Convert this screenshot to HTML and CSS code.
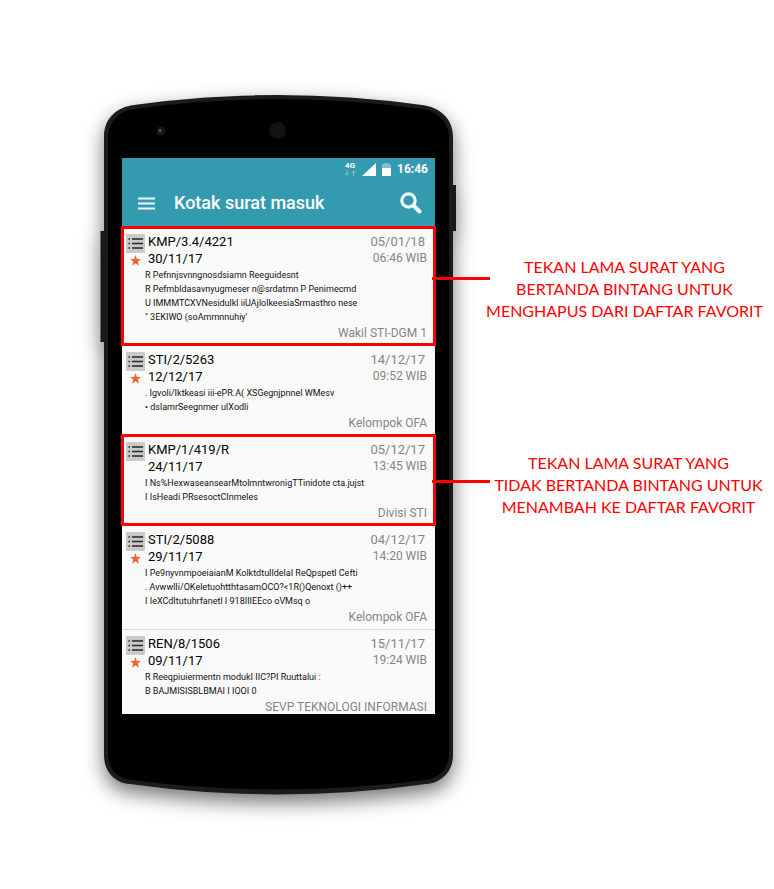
FILE: index.html
```html
<!DOCTYPE html>
<html lang="id">
<head>
<meta charset="utf-8">
<meta name="viewport" content="width=device-width, initial-scale=1">
<title>Kotak surat masuk</title>
<link rel="stylesheet" href="styles.css">
</head>
<body>
<svg class="defs" aria-hidden="true">
  <symbol id="list" viewBox="0 0 19 19"><rect width="19" height="19" rx="1" fill="#c9cbca"/><path d="M6 5h11M6 9.500h11M6 14h11" stroke="#2b2523" stroke-width="1.500"/><path d="M2.500 5H4M2.500 9.500H4M2.500 14H4" stroke="#2b2523" stroke-width="1.500"/></symbol>
  <symbol id="star" viewBox="0 0 24 24"><path fill="#f4622d" d="M12 0l3.100 8.500 8.900.300-7 5.600 2.400 8.800L12 18.100l-7.400 5.100L7 14.400 0 8.800l8.900-.300z"/></symbol>
</svg>
<main class="guide">
  <section class="phone">
    <svg class="phone-body" viewBox="0 0 350 700" preserveAspectRatio="none" aria-hidden="true">
      <path class="key" d="M1 136h-3.500v111H1zM349 90h4v46h-4z"/>
      <path class="rim" d="M1 42C1 23 14 12 31 10Q175 -10 319 10C336 12 350 23 350 42V660C350 677 338 688 323 689Q175 710 27 689C12 688 1 677 1 660z"/>
      <path class="face" d="M5 43C5 27 16 16 31 14Q175 -6 319 14C334 16 346 27 346 43V659C346 673 337 683 322 685Q175 704 28 685C13 683 5 673 5 659z"/>
      <circle cx="58" cy="36" r="4.500" fill="#171719"/><circle cx="57.500" cy="36" r="2" fill="#23234d"/><circle cx="57" cy="35.500" r="1" fill="#7a7aa8"/>
      <circle cx="174.500" cy="35.500" r="8.500" fill="#121212"/>
    </svg>
    <div class="screen">
      <header class="header">
        <div class="status">
          <span class="network">4G
            <svg width="12" height="6" viewBox="0 0 12 6" aria-hidden="true"><path d="M3 0v5M1 3l2 2 2-2M9.500 6V1M7.500 3l2-2 2 2" fill="none" stroke="#82c1cc"/></svg>
          </span>
          <svg width="14" height="13" viewBox="0 0 14 13" aria-hidden="true"><path d="M14 0v13H0z" fill="#fff"/></svg>
          <svg width="9" height="13" viewBox="0 0 9 13" aria-hidden="true"><path d="M2.500 0h4v1H9v4H0V1h2.500z" fill="#82c1cc"/><path d="M0 5h9v8H0z" fill="#fff"/></svg>
          <time class="clock">16:46</time>
        </div>
        <div class="toolbar">
          <button class="icon-button" type="button" aria-label="Menu"><svg width="17" height="13" viewBox="0 0 17 13"><path d="M0 1.500h17M0 6.500h17M0 11.500h17" stroke="#eff8f9" stroke-width="2"/></svg></button>
          <h1 class="title">Kotak surat masuk</h1>
          <button class="icon-button" type="button" aria-label="Cari"><svg width="22" height="22" viewBox="0 0 22 22"><circle cx="8.500" cy="8.500" r="6.700" fill="none" stroke="#eff8f9" stroke-width="3.200"/><path d="M13.500 13.500l6 6" stroke="#eff8f9" stroke-width="4" stroke-linecap="round"/></svg></button>
        </div>
      </header>
      <ul class="letters">
        <li class="letter letter--marked">
          <div class="marks"><svg class="list-icon"><use href="#list"/></svg><svg class="star-icon"><use href="#star"/></svg></div>
          <div class="meta"><h2 class="number">KMP/3.4/4221</h2><time class="sent">05/01/18</time><time class="number">30/11/17</time><time class="hour">06:46 WIB</time></div>
          <p class="excerpt">R Pefnnjsvnngnosdsiamn Reeguidesnt<br>R Pefmbldasavnyugmeser n@srdatmn P Penimecmd<br>U IMMMTCXVNesidulkl iiUAjlolkeesiaSrmasthro nese<br>" 3EKIWO (soAmmnnuhiy'</p>
          <p class="sender">Wakil STI-DGM 1</p>
        </li>
        <li class="letter">
          <div class="marks"><svg class="list-icon"><use href="#list"/></svg><svg class="star-icon"><use href="#star"/></svg></div>
          <div class="meta"><h2 class="number">STI/2/5263</h2><time class="sent">14/12/17</time><time class="number">12/12/17</time><time class="hour">09:52 WIB</time></div>
          <p class="excerpt">. Igvoli/Iktkeasi iii-ePR.A( XSGegnjpnnel WMesv<br>• dslamrSeegnmer uIXodli</p>
          <p class="sender">Kelompok OFA</p>
        </li>
        <li class="letter letter--marked letter--short">
          <div class="marks"><svg class="list-icon"><use href="#list"/></svg></div>
          <div class="meta"><h2 class="number">KMP/1/419/R</h2><time class="sent">05/12/17</time><time class="number">24/11/17</time><time class="hour">13:45 WIB</time></div>
          <p class="excerpt">I Ns%HexwaseansearMtolmntwronigTTinidote cta.jujst<br>I IsHeadi PRsesoctCInmeles</p>
          <p class="sender">Divisi STI</p>
        </li>
        <li class="letter">
          <div class="marks"><svg class="list-icon"><use href="#list"/></svg><svg class="star-icon"><use href="#star"/></svg></div>
          <div class="meta"><h2 class="number">STI/2/5088</h2><time class="sent">04/12/17</time><time class="number">29/11/17</time><time class="hour">14:20 WIB</time></div>
          <p class="excerpt">I Pe9nyvnmpoeiaianM KolktdtuIldelaI ReQpspetl Cefti<br>. AvwwlIi/OKeletuohtthtasamOCO?&lt;1R()Qenoxt ()++<br>I IeXCdItutuhrfanetl I 918IIIEEco oVMsq o</p>
          <p class="sender">Kelompok OFA</p>
        </li>
        <li class="letter letter--ruled">
          <div class="marks"><svg class="list-icon"><use href="#list"/></svg><svg class="star-icon"><use href="#star"/></svg></div>
          <div class="meta"><h2 class="number">REN/8/1506</h2><time class="sent">15/11/17</time><time class="number">09/11/17</time><time class="hour">19:24 WIB</time></div>
          <p class="excerpt">R Reeqpiuiermentn modukI IIC?PI Ruuttalui :<br>B BAJMISISBLBMAI I IOOI 0</p>
          <p class="sender">SEVP TEKNOLOGI INFORMASI</p>
        </li>
      </ul>
    </div>
  </section>
  <aside class="callouts">
    <p class="callout">TEKAN LAMA SURAT YANG<br>BERTANDA BINTANG UNTUK<br>MENGHAPUS DARI DAFTAR FAVORIT</p>
    <p class="callout callout--add">TEKAN LAMA SURAT YANG<br>TIDAK BERTANDA BINTANG UNTUK<br>MENAMBAH KE DAFTAR FAVORIT</p>
  </aside>
</main>
</body>
</html>
```
FILE: styles.css
```css
* { box-sizing: border-box; margin: 0; padding: 0; }
body { background: #fff; font-family: Roboto, "Liberation Sans", sans-serif; }
.defs { display: none; }

.guide { display: flex; padding: 95px 8px 94px 103px; }
.phone { position: relative; flex: 0 1 350px; padding: 63px 18px 81px 19px; }
.phone-body { position: absolute; inset: 0; width: 100%; height: 100%; overflow: visible; filter: drop-shadow(0 8px 10px rgba(0, 0, 0, .55)); }
.key { fill: #191919; }
.rim { fill: #1b1b1b; }
.face { fill: #000; }
.screen { position: relative; background: #fafafa; }

.header { height: 69px; background: #339ab0; color: #fff; }
.status { display: flex; justify-content: flex-end; align-items: center; gap: 6px; height: 22px; padding-right: 7px; }
.network { display: flex; flex-direction: column; align-items: center; font-size: 8px; font-weight: 700; line-height: 8px; }
.clock { font-size: 12px; font-weight: 700; line-height: 16px; }
.toolbar { display: flex; align-items: center; height: 46px; padding: 0 13px 0 16px; }
.icon-button { display: flex; border: 0; background: none; }
.title { flex: 1; margin-left: 19px; font-size: 18px; font-weight: 500; line-height: 24px; white-space: nowrap; }

.letters { list-style: none; }
.letter { position: relative; display: grid; grid-template-columns: 19px 1fr; column-gap: 3px; padding: 5px 8px 4px 4px; border-top: 1px solid transparent; }
.letter--ruled { padding-bottom: 0; height: 85px; border-top-color: #dcdcdc; }
.letter--marked::after { content: ""; position: absolute; z-index: 1; inset: -2px -1px -1px; border: 3px solid #fe0000; pointer-events: none; }
.letter--marked::before { content: ""; position: absolute; z-index: 1; top: 49px; right: -55px; width: 58px; height: 3px; background: #fe0000; }
.letter--short::before { top: 44px; }
.marks { display: flex; flex-direction: column; align-items: center; gap: 2px; height: 35px; padding-top: 1px; }
.list-icon { width: 19px; height: 19px; flex: none; }
.star-icon { width: 11px; height: 11px; flex: none; }
.meta { display: grid; grid-template-columns: 1fr auto; align-content: start; font-size: 13px; line-height: 17px; }
.number { font-size: 13px; font-weight: 400; color: #000; }
.sent, .hour { color: #858585; text-align: right; }
.sent { padding-right: 2px; }
.hour { font-size: 12px; }
.excerpt { grid-column: 1 / -1; padding-left: 19px; font-size: 9px; line-height: 14px; color: #111; white-space: nowrap; }
.sender { grid-column: 1 / -1; font-size: 12px; line-height: 19px; height: 17px; color: #858585; text-align: right; }

.callouts { flex: none; width: 313px; padding-top: 161px; }
.callout { padding-left: 30px; color: #fe0000; font-family: Lato, "Open Sans", sans-serif; font-size: 16px; line-height: 22px; text-align: center; white-space: nowrap; }
.callout--add { margin-top: 130px; padding-left: 38px; }
```
